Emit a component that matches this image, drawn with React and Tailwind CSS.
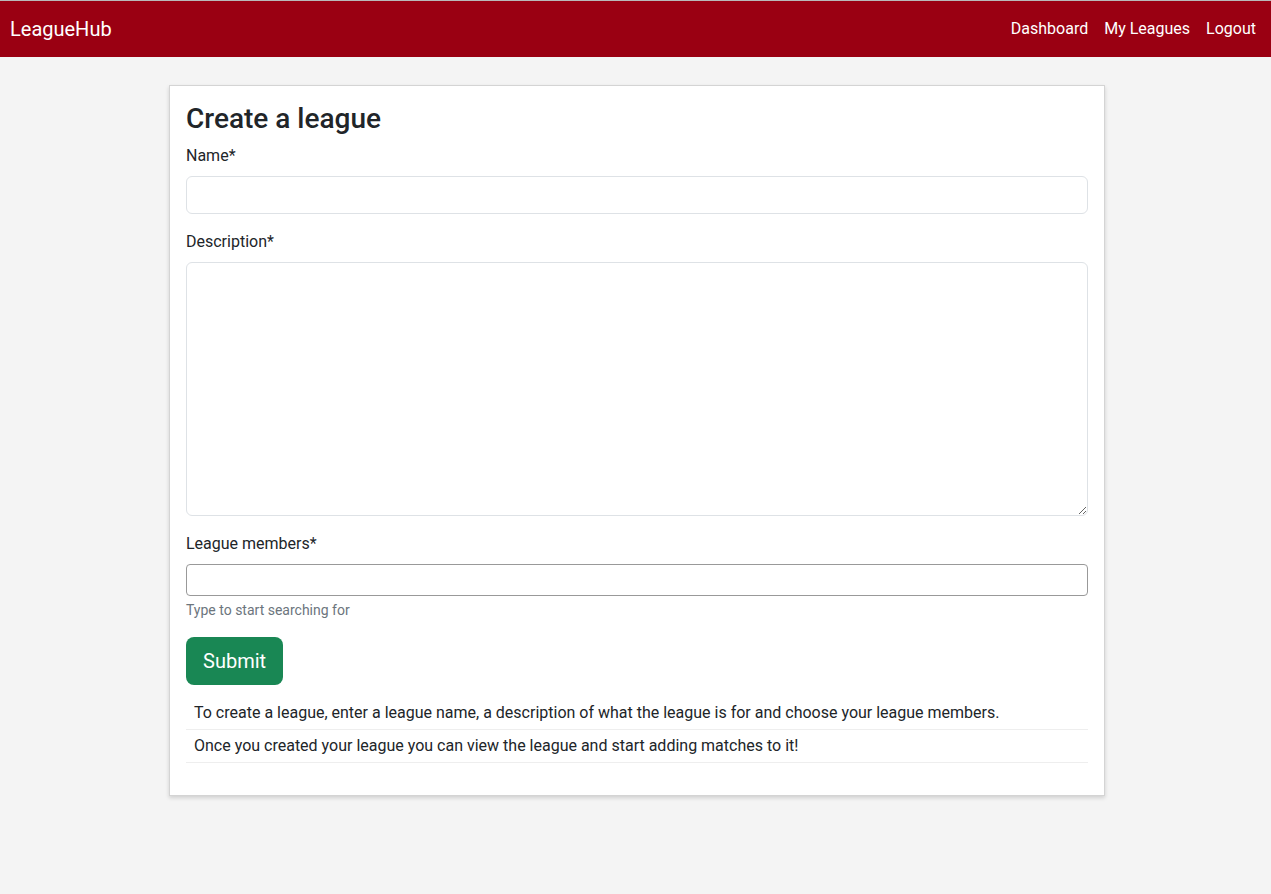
import { useState } from 'react'

const NAV_LINKS = ['Dashboard', 'My Leagues', 'Logout']

const HINTS = [
  'To create a league, enter a league name, a description of what the league is for and choose your league members.',
  'Once you created your league you can view the league and start adding matches to it!',
]

export default function App() {
  const [name, setName] = useState('')
  const [description, setDescription] = useState('')
  const [members, setMembers] = useState('')

  return (
    <div className="min-h-[894px] bg-[#f4f4f4] text-[#212529]" style={{ fontFamily: 'Roboto, "Liberation Sans", sans-serif' }}>
      <nav className="h-[57px] bg-[#9a0012] border-t border-[#b9b9b9] flex items-center justify-between pl-[10px] pr-[7px]">
        <span className="text-white text-[20px]">LeagueHub</span>
        <div className="flex">
          {NAV_LINKS.map((link) => (
            <a key={link} href="#" className="px-2 text-white text-base">{link}</a>
          ))}
        </div>
      </nav>

      <div className="pt-[28px] flex justify-center">
        <div className="w-[936px] ml-[3px] bg-white border border-[#d4d4d4] shadow-[0_2px_4px_rgba(0,0,0,0.15)] px-4 pt-4 pb-4">
          <h3 className="text-[28px] font-medium leading-[1.2] mb-2">Create a league</h3>

          <div className="mb-4">
            <label className="block text-base leading-6 mb-2">Name*</label>
            <input
              value={name}
              onChange={(e) => setName(e.target.value)}
              className="block w-full h-[38px] px-3 rounded-[6px] border border-[#dee2e6] outline-none"
            />
          </div>

          <div className="mb-4">
            <label className="block text-base leading-6 mb-2">Description*</label>
            <textarea
              value={description}
              onChange={(e) => setDescription(e.target.value)}
              className="block w-full h-[254px] px-3 py-1.5 rounded-[6px] border border-[#dee2e6] outline-none"
            />
          </div>

          <div className="mb-4">
            <label className="block text-base leading-6 mb-2">League members*</label>
            <input
              value={members}
              onChange={(e) => setMembers(e.target.value)}
              className="block w-full h-[32px] px-2 rounded-[4px] border border-[#999] outline-none"
            />
            <div className="text-sm text-[#6c757d] mt-[4px] leading-[21px]">Type to start searching for</div>
          </div>

          <button className="h-[48px] px-[17px] rounded-[8px] bg-[#198754] text-white text-[20px] mb-[12px]">Submit</button>

          <ul className="mb-4">
            {HINTS.map((hint) => (
              <li key={hint} className="px-2 py-1 leading-6 border-b border-[#eeeeee]">{hint}</li>
            ))}
          </ul>
        </div>
      </div>
    </div>
  )
}
